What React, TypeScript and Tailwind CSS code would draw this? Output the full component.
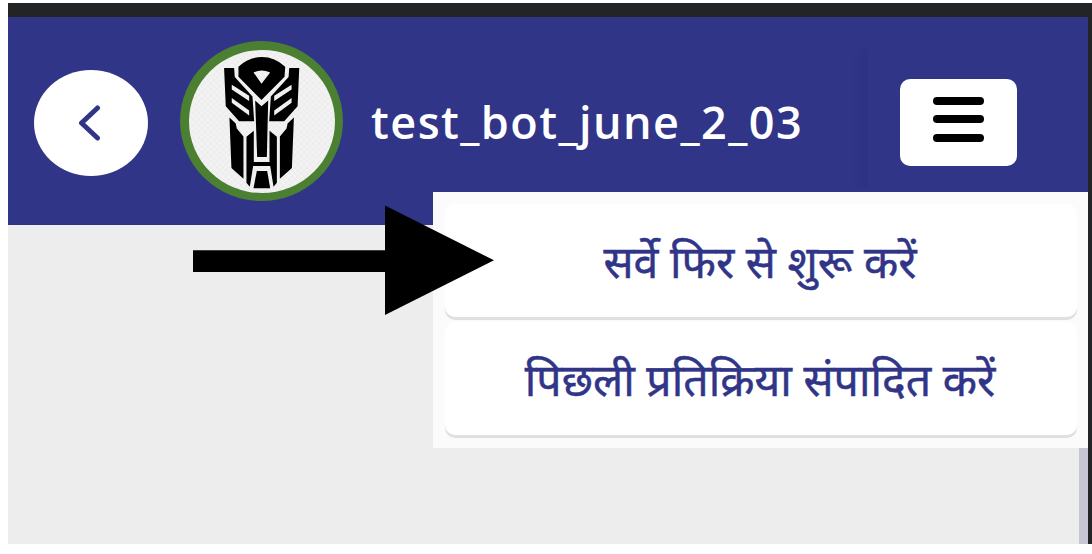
const menuItems = ["सर्वे फिर से शुरू करें", "पिछली प्रतिक्रिया संपादित करें"];

function Side() {
  return (
    <>
      <path
        fill="#000"
        fillRule="evenodd"
        d="M161 112H191L193 139L246 197L251 271H206L166 226ZM184 162V176L236 211V195ZM184 202V216L236 254V239Z"
      />
      <path fill="#000" d="M177 260L196 278L199 293L219 317V443L183 411Z" />
    </>
  );
}

function RobotLogo() {
  return (
    <svg viewBox="56 58 437 428" preserveAspectRatio="none" className="block h-full w-full">
      <defs>
        <pattern id="mesh" width="18" height="18" patternUnits="userSpaceOnUse">
          <rect width="18" height="18" fill="#f3f3f3" />
          <path d="M0 0H9V9H0ZM9 9H18V18H9Z" fill="#ededed" />
        </pattern>
      </defs>
      <rect x="50" y="50" width="450" height="450" fill="url(#mesh)" />
      <Side />
      <g transform="translate(547 0) scale(-1 1)">
        <Side />
      </g>
      <path
        fill="#000"
        fillRule="evenodd"
        d="M204 108Q235 79 274 79Q313 79 344 108L342 138L273 208L204 138ZM249 125Q273 114 299 125L273 159Z"
      />
      <path fill="#000" d="M254 209L273 226L293 209L289 378H260Z" />
      <path
        fill="#000"
        d="M228 318L250 300V393H297V300L319 318V455L309 467L299 405H248L238 467L228 455Z"
      />
      <path fill="#000" d="M259 420H290L299 472H249Z" />
    </svg>
  );
}

export default function App() {
  return (
    <div className="h-[554px] w-[1092px] overflow-hidden bg-white pt-[3px] pl-2">
      <div className="h-[541px] bg-[#232426] pt-[14px] pr-1">
        <div className="relative flex h-[527px] flex-col bg-[#ededed]">
          <header className="flex h-[208px] shrink-0 items-start bg-[#303588]">
            <button className="mt-[53px] ml-[26px] flex h-[106px] w-[114px] items-center justify-center rounded-[50%] bg-white">
              <svg width="24" height="38" viewBox="0 0 24 38" fill="none" className="mr-[5px] mb-[1px]">
                <path d="M20.5 4L4.5 19L20.5 34" stroke="#303588" strokeWidth="5" strokeLinecap="round" strokeLinejoin="round" />
              </svg>
            </button>
            <div className="mt-6 ml-8 h-[160px] w-[163px] overflow-hidden rounded-[50%] bg-[#4b7f32] p-[8.5px]">
              <div className="h-full w-full overflow-hidden rounded-[50%]">
                <RobotLogo />
              </div>
            </div>
            <h1 className="mt-[75px] ml-[28px] w-[479px] font-['Open_Sans','Noto_Sans',sans-serif] text-[45px] leading-[60px] font-semibold tracking-[1.45px] whitespace-nowrap text-white">
              test_bot_june_2_03
            </h1>
            <div className="-ml-[1px] mt-8 h-[140px] w-[19px] bg-linear-to-r from-transparent to-[#2e3282]" />
            <button className="mt-[61.5px] ml-[32px] flex h-[87px] w-[116.5px] flex-col items-center gap-[10.3px] rounded-[10px] bg-white pt-[18.5px]">
              <span className="h-[8px] w-[51px] rounded-full bg-black" />
              <span className="h-[8px] w-[51px] rounded-full bg-black" />
              <span className="h-[8px] w-[51px] rounded-full bg-black" />
            </button>
          </header>
          <main className="flex flex-1 justify-end">
            <div className="w-[9px] bg-[#c7c6d4]" />
          </main>
          <nav className="absolute top-[175px] right-0 flex h-[256px] w-[655px] flex-col gap-[5px] bg-[#fbfbfb] pt-3 pr-[11px] pl-3">
            {menuItems.map((label) => (
              <button
                key={label}
                className="h-[113px] shrink-0 rounded-[10px] bg-white pt-[13px] pr-[2px] text-center font-['Noto_Sans_Devanagari','Noto_Sans',sans-serif] text-[44.6px] leading-[100px] whitespace-nowrap text-[#303588] shadow-[0_3px_0_#e0e0e0] [-webkit-text-stroke:0.5px_#303588]"
              >
                {label}
              </button>
            ))}
          </nav>
          <svg className="absolute top-[188px] left-[185px]" width="302" height="111" viewBox="0 0 302 111">
            <path d="M0 45.3H192V0.5L301 55.3L192 110V67H0Z" fill="#000" />
          </svg>
        </div>
      </div>
    </div>
  );
}
